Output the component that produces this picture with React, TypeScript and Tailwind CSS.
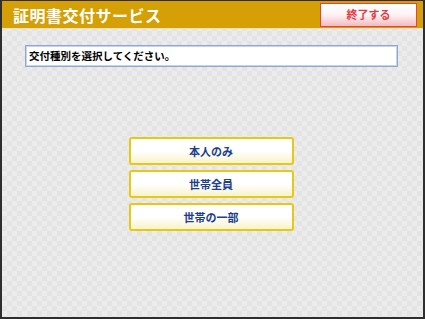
const choices = ["本人のみ", "世帯全員", "世帯の一部"];

const App = () => {
  return (
    <div className="h-[319px] w-[425px] overflow-hidden border-x-2 border-b-2 border-t border-[#2e2e2e] bg-[#e8e8e8] bg-[repeating-conic-gradient(#e4e4e4_0%_25%,#ececec_0%_50%)] bg-[length:10px_10px] font-['Noto_Sans_CJK_JP',sans-serif]">
      <header className="flex h-[28px] items-center justify-between border-b border-[#f1e2b0] bg-[#d4a005] pl-[11px] pr-[6px]">
        <h1 className="text-[16px] font-bold leading-none tracking-[0.5px] text-white">
          証明書交付サービス
        </h1>
        <button className="flex h-[24px] w-[97px] items-center justify-center border border-[#e8403f] bg-gradient-to-b from-white via-[#fdf2f4] to-[#f3b9c2] text-[11px] font-bold text-[#e33b3f]">
          終了する
        </button>
      </header>

      <div className="px-[23px] pt-[16px]">
        <div className="flex h-[22px] w-[373px] items-center border border-[#8ea6d6] bg-white px-[3px] text-[10.5px] font-bold text-black shadow-[inset_0_0_0_1px_#c8d4ee]">
          交付種別を選択してください。
        </div>
      </div>

      <div className="mt-[70px] flex flex-col items-center gap-[5px] pr-[3px]">
        {choices.map((c) => (
          <button
            key={c}
            className="flex h-[28px] w-[165px] items-center justify-center rounded-[3px] border-2 border-[#e6c914] bg-gradient-to-b from-white via-white to-[#f8f3c8] text-[11px] font-bold text-[#1d3f8c]"
          >
            {c}
          </button>
        ))}
      </div>
    </div>
  );
};

export default App;
